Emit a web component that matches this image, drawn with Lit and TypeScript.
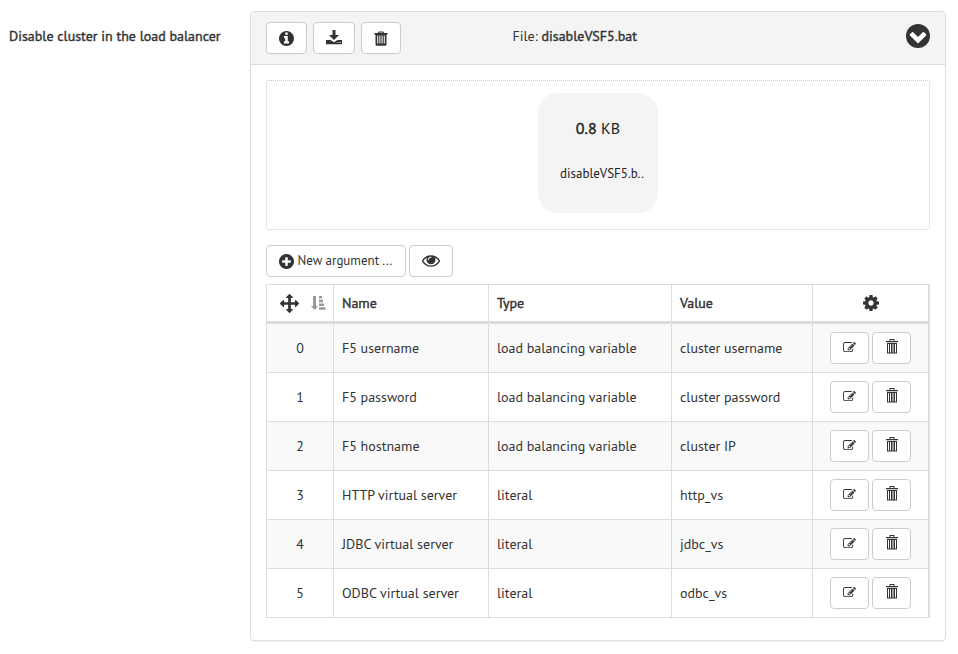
import { LitElement, html, css, svg } from "lit";
import { customElement, property } from "lit/decorators.js";

const disc =
  "M1664 896q0 209-103 385.5t-279.5 279.5-385.5 103-385.5-103-279.5-279.5-103-385.5 103-385.5 279.5-279.5 385.5-103 385.5 103 279.5 279.5 103 385.5z";

const icons: Record<string, { box: string; w: number; h: number; body: unknown }> = {
  info: {
    box: "128 128 1536 1536", w: 15, h: 15,
    body: svg`<path fill-rule="evenodd" d="${disc}M1152 1376v-160q0-14-9-23t-23-9h-96v-512q0-14-9-23t-23-9h-320q-14 0-23 9t-9 23v160q0 14 9 23t23 9h96v320h-96q-14 0-23 9t-9 23v160q0 14 9 23t23 9h448q14 0 23-9t9-23zM1024 480v-160q0-14-9-23t-23-9h-192q-14 0-23 9t-9 23v160q0 14 9 23t23 9h192q14 0 23-9t9-23z"/>`,
  },
  plus: {
    box: "128 128 1536 1536", w: 15, h: 15,
    body: svg`<path fill-rule="evenodd" d="${disc}M1344 960v-128q0-26-19-45t-45-19h-256v-256q0-26-19-45t-45-19h-128q-26 0-45 19t-19 45v256h-256q-26 0-45 19t-19 45v128q0 26 19 45t45 19h256v256q0 26 19 45t45 19h128q26 0 45-19t19-45v-256h256q26 0 45-19t19-45z"/>`,
  },
  chevron: {
    box: "0 0 24 24", w: 24, h: 24,
    body: svg`<circle cx="12" cy="12" r="12"/><path fill="#fff" d="M12 19.6 3.9 11.5q-.6-.6 0-1.2L6 8.2q.6-.6 1.2 0L12 13l4.800-4.800q.6-.6 1.200 0l2.100 2.100q.6.6 0 1.200z"/>`,
  },
  download: {
    box: "0 0 16 16", w: 16, h: 16,
    body: svg`<path d="M6.500 0h3v5h3.500L8 10 3 5h3.500z"/><path fill-rule="evenodd" d="M0 10h4.600L8 12.200l3.400-2.200H16v4.300H0zM11.500 12h1v1h-1zM13.700 12h1v1h-1z"/>`,
  },
  trash: {
    box: "0 0 14 15", w: 14, h: 15,
    body: svg`<path fill-rule="evenodd" d="M.5 2h3.300L4.800.4h4.400L10.200 2h3.300v1.700h-1V13.200q0 1.600-1.400 1.600H2.900q-1.400 0-1.400-1.600V3.700h-1zM5.300 2h3.400l-.4-.6H5.700zM3.200 4.500v8h1v-8zM5.400 4.500v8h1v-8zM7.600 4.500v8h1v-8zM9.800 4.500v8h1v-8z"/>`,
  },
  trashThin: {
    box: "0 0 12 15", w: 12, h: 15,
    body: svg`<path fill-rule="evenodd" d="M0 2h3.500V0h5v2H12v1.200H0zM4.500 1v1h3V1zM1 4h10v10.500H1zM2 5v8.500h1V5zM4 5v8.500h1V5zM6.500 5v8.500h1V5zM9 5v8.500h1V5z"/>`,
  },
  eye: {
    box: "0 384 1792 1152", w: 18, h: 12,
    body: svg`<path d="M1664 960q-152-236-381-353 61 104 61 225 0 185-131.500 316.500t-316.500 131.500-316.500-131.500-131.500-316.500q0-121 61-225-229 117-381 353 133 205 333.500 326.500t434.500 121.500 434.500-121.500 333.500-326.500zm-720-384q0-20-14-34t-34-14q-125 0-214.500 89.500t-89.500 214.500q0 20 14 34t34 14 34-14 14-34q0-86 61-147t147-61q20 0 34-14t14-34zm848 384q0 34-20 69-140 230-376.500 368.500t-499.500 138.500-499.500-139-376.500-368q-20-35-20-69t20-69q140-229 376.500-368t499.500-139 499.500 139 376.500 368q20 35 20 69z"/>`,
  },
  arrows: {
    box: "0 0 1792 1792", w: 19, h: 19,
    body: svg`<path d="M1792 896q0 26-19 45l-256 256q-19 19-45 19t-45-19-19-45v-128h-384v384h128q26 0 45 19t19 45-19 45l-256 256q-19 19-45 19t-45-19l-256-256q-19-19-19-45t19-45 45-19h128v-384h-384v128q0 26-19 45t-45 19-45-19l-256-256q-19-19-19-45t19-45l256-256q19-19 45-19t45 19 19 45v128h384v-384h-128q-26 0-45-19t-19-45 19-45l256-256q19-19 45-19t45 19l256 256q19 19 19 45t-19 45-45 19h-128v384h384v-128q0-26 19-45t45-19 45 19l256 256q19 19 19 45z"/>`,
  },
  sort: {
    box: "0 0 15 16", w: 15, h: 16,
    body: svg`<path d="M2 1h3v10h2L3.500 15 0 11h2zM8 1h3v2.500H8zM8 4.800h4v2.400H8zM8 8.500h5v2.400H8zM8 12.300h6.500v2.400H8z"/>`,
  },
  cog: {
    box: "128 128 1536 1536", w: 16, h: 16,
    body: svg`<path d="M1152 896q0-106-75-181t-181-75-181 75-75 181 75 181 181 75 181-75 75-181zm512-109v222q0 12-8 23t-20 13l-185 28q-19 54-39 91 35 50 107 138 10 12 10 25t-9 23q-27 37-99 108t-94 71q-12 0-26-9l-138-108q-44 23-91 38-16 136-29 186-7 28-36 28h-222q-14 0-24.500-8.500t-11.500-21.500l-28-184q-49-16-90-37l-141 107q-10 9-25 9-14 0-25-11-126-114-165-168-7-10-7-23 0-12 8-23 15-21 51-66.500t54-70.500q-27-50-41-99l-183-27q-13-2-21-12.500t-8-23.500v-222q0-12 8-23t19-13l186-28q14-46 39-92-40-57-107-138-10-12-10-24 0-10 9-23 26-36 98.500-107.500t94.500-71.500q13 0 26 10l138 107q44-23 91-38 16-136 29-186 7-28 36-28h222q14 0 24.500 8.500t11.500 21.500l28 184q49 16 90 37l142-107q9-9 24-9 13 0 25 10 129 119 165 170 7 8 7 22 0 12-8 23-15 21-51 66.500t-54 70.500q26 50 41 98l183 28q13 2 21 12.500t8 23.500z"/>`,
  },
  edit: {
    box: "0 128 1792 1536", w: 13, h: 11,
    body: svg`<path d="M888 1184l116-116-152-152-116 116v56h96v96h56zm440-720q-16-16-33 1l-350 350q-17 17-1 33t33-1l350-350q17-17 1-33zm80 594v190q0 119-84.500 203.500t-203.500 84.500h-832q-119 0-203.500-84.500t-84.500-203.500v-832q0-119 84.500-203.500t203.500-84.500h832q63 0 117 25 15 7 18 23 3 17-9 29l-49 49q-14 14-32 8-23-6-45-6h-832q-66 0-113 47t-47 113v832q0 66 47 113t113 47h832q66 0 113-47t47-113v-126q0-13 9-22l64-64q15-15 35-7t20 29zm-96-738l288 288-672 672h-288v-288zm444 132l-92 92-288-288 92-92q28-28 68-28t68 28l152 152q28 28 28 68t-28 68z"/>`,
  },
};

@customElement("ui-icon")
class UiIcon extends LitElement {
  @property() name = "info";
  static styles = css`
    :host { display: block; flex: none; line-height: 0; }
    .glyph { display: block; fill: currentColor; }
  `;
  render() {
    const i = icons[this.name];
    return html`<svg class="glyph" width=${i.w} height=${i.h} viewBox=${i.box}>${i.body}</svg>`;
  }
}

const rows = [
  ["F5 username", "load balancing variable", "cluster username"],
  ["F5 password", "load balancing variable", "cluster password"],
  ["F5 hostname", "load balancing variable", "cluster IP"],
  ["HTTP virtual server", "literal", "http_vs"],
  ["JDBC virtual server", "literal", "jdbc_vs"],
  ["ODBC virtual server", "literal", "odbc_vs"],
];

@customElement("app-root")
class AppRoot extends LitElement {
  static styles = css`
    * { box-sizing: border-box; }
    :host {
      display: flex; align-items: flex-start; width: 958px; height: 654px; padding: 11px 12px 0 9px;
      box-sizing: border-box; background: #fff; color: #333; overflow: hidden;
      font: 14px/20px "PT Sans", "Noto Sans", sans-serif; white-space: nowrap;
    }
    .strong { -webkit-text-stroke: 0.4px currentColor; }
    .label { width: 241px; padding-top: 15px; }
    .panel { width: 696px; height: 630px; border: 1px solid #ddd; border-radius: 4px; box-shadow: 0 1px 1px rgba(0,0,0,.05); }
    .head { display: flex; align-items: center; gap: 6px; height: 53px; padding: 0 15px;
      background: #f4f4f4; border-bottom: 1px solid #ddd; border-radius: 3px 3px 0 0; }
    .btn { display: flex; align-items: center; justify-content: center; height: 32px; padding: 0;
      border: 1px solid #ccc; border-radius: 4px; background: #fff; color: #333; font: inherit; }
    .w41 { width: 41px; } .w42 { width: 42px; } .w40 { width: 40px; }
    .file { flex: 1; padding: 0 0 4px 105.500px; }
    .toggle { margin-bottom: 4px; }
    .body { padding: 15px; }
    .drop { display: flex; justify-content: center; height: 150px; padding-top: 12px; border: 1px dotted #ccc; border-radius: 3px; }
    .tile { width: 120px; height: 120px; border-radius: 20px; background: #f4f4f4; color: #222; padding-top: 25px; }
    .size { text-align: center; font-size: 16px; }
    .name { margin: 27px 0 0 22px; line-height: 18px; font-size: 13px; }
    .tools { display: flex; gap: 3px; margin: 15px 0 7px; }
    .new { width: 140px; gap: 4px; font-size: 13px; padding-right: 1px; }
    .w44 { width: 44px; }
    .table { border: solid #ddd; border-width: 1px 2px 0 1px; }
    .row { display: grid; grid-template-columns: 67px 155px 183px 141px 115px; height: 49px; border-bottom: 1px solid #ddd; }
    .row:nth-child(even) { background: #f9f9f9; }
    .top { height: 39px; border-bottom-width: 3px; }
    .cell { display: flex; align-items: center; padding: 0 8px; border-right: 1px solid #ddd; }
    .top .cell { padding-bottom: 1px; }
    .cell:last-child { border-right: 0; }
    .num { justify-content: center; }
    .top .order { gap: 12px; padding: 0 0 0 13px; color: #333; }
    .muted { color: #999; }
    .acts { gap: 3px; padding: 0 0 0 17px; }
    .top .gear { justify-content: center; }
    .w39 { width: 39px; }
    .up { padding-bottom: 3px; }
    .edit { padding-bottom: 1px; }
  `;
  render() {
    return html`
      <div class="label strong">Disable cluster in the load balancer</div>
      <div class="panel">
        <div class="head">
          <button class="btn w41"><ui-icon name="info"></ui-icon></button>
          <button class="btn w42"><ui-icon name="download"></ui-icon></button>
          <button class="btn w40"><ui-icon name="trash"></ui-icon></button>
          <div class="file">File: <span class="strong">disableVSF5.bat</span></div>
          <ui-icon class="toggle" name="chevron"></ui-icon>
        </div>
        <div class="body">
          <div class="drop">
            <div class="tile">
              <div class="size"><span class="strong">0.8</span> KB</div>
              <div class="name">disableVSF5.b..</div>
            </div>
          </div>
          <div class="tools">
            <button class="btn new"><ui-icon name="plus"></ui-icon><span>New argument ...</span></button>
            <button class="btn w44"><ui-icon name="eye"></ui-icon></button>
          </div>
          <div class="table">
            <div class="row top">
              <div class="cell order"><ui-icon name="arrows"></ui-icon><ui-icon class="muted" name="sort"></ui-icon></div>
              <div class="cell strong">Name</div>
              <div class="cell strong">Type</div>
              <div class="cell strong">Value</div>
              <div class="cell gear"><ui-icon name="cog"></ui-icon></div>
            </div>
            ${rows.map((r, i) => html`
              <div class="row">
                <div class="cell num">${i}</div>
                ${r.map((t) => html`<div class="cell">${t}</div>`)}
                <div class="cell acts">
                  <button class="btn w39 edit"><ui-icon name="edit"></ui-icon></button>
                  <button class="btn w39 up"><ui-icon name="trashThin"></ui-icon></button>
                </div>
              </div>`)}
          </div>
        </div>
      </div>
    `;
  }
}
